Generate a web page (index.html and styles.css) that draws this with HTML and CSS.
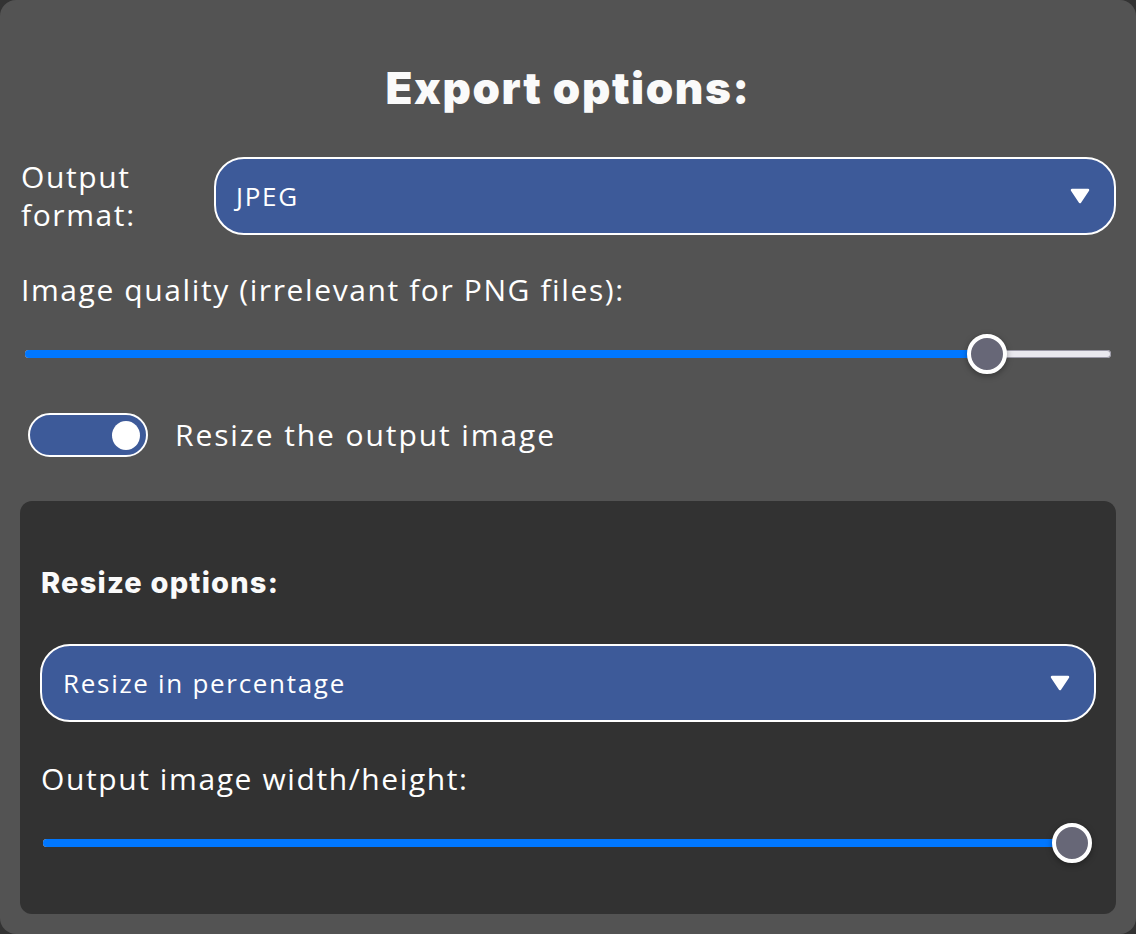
FILE: index.html
```html
<!DOCTYPE html>
<html>
<head>
<meta charset="utf-8">
<link rel="stylesheet" href="styles.css">
</head>
<body>
<div class="card">
  <h1 class="title">Export options:</h1>
  <div class="format-row">
    <label class="label format-label">Output<br>format:</label>
    <div class="select select-main">
      <span>JPEG</span>
      <svg class="arrow" width="20" height="16" viewBox="0 0 20 16"><path d="M2 2 L18 2 L10 14 Z" fill="#fff" stroke="#fff" stroke-width="2.5" stroke-linejoin="round"/></svg>
    </div>
  </div>
  <div class="label quality-label">Image quality (irrelevant for PNG files):</div>
  <div class="slider slider-quality">
    <div class="track"><div class="fill" style="width:88.6%"></div></div>
    <div class="thumb" style="left:88.6%"></div>
  </div>
  <div class="toggle-row">
    <div class="toggle"><div class="knob"></div></div>
    <span class="label toggle-label">Resize the output image</span>
  </div>
  <div class="inner">
    <h2 class="subtitle">Resize options:</h2>
    <div class="select select-resize">
      <span>Resize in percentage</span>
      <svg class="arrow" width="20" height="16" viewBox="0 0 20 16"><path d="M2 2 L18 2 L10 14 Z" fill="#fff" stroke="#fff" stroke-width="2.5" stroke-linejoin="round"/></svg>
    </div>
    <div class="label size-label">Output image width/height:</div>
    <div class="slider slider-size">
      <div class="track"><div class="fill" style="width:100%"></div></div>
      <div class="thumb" style="left:100%"></div>
    </div>
  </div>
</div>
</body>
</html>
```
FILE: styles.css
```css
html, body {
  margin: 0;
  padding: 0;
  background: #333333;
}
body {
  font-family: "Open Sans", "Liberation Sans", sans-serif;
  color: #ffffff;
}
.card {
  width: 1136px;
  height: 934px;
  box-sizing: border-box;
  background: #535353;
  border-radius: 16px;
  padding: 60px 20px 20px 20px;
  display: flex;
  flex-direction: column;
}
.title {
  margin: 0;
  text-align: center;
  font-family: Inter, "Open Sans", sans-serif;
  font-weight: 900;
  font-size: 44px;
  line-height: 56px;
  letter-spacing: 1.6px;
  color: #fafafa;
}
.label {
  font-size: 30px;
  line-height: 38px;
  color: #ffffff;
  letter-spacing: 1.6px;
}
.toggle-label {
  letter-spacing: 1.9px;
}
.format-row {
  display: flex;
  align-items: center;
  margin-top: 41px;
}
.format-label {
  width: 193px;
  flex: none;
  padding-left: 1px;
}
.select {
  flex: 1;
  height: 78px;
  box-sizing: border-box;
  border: 2px solid #ffffff;
  border-radius: 30px;
  background: #3d5a99;
  display: flex;
  align-items: center;
  justify-content: space-between;
  padding: 0 24px 0 20px;
  font-size: 26px;
  letter-spacing: 1.7px;
}
.arrow {
  display: block;
}
.quality-label {
  margin-top: 36px;
  padding-left: 1px;
}
.slider {
  position: relative;
  height: 40px;
  margin: 0 5px;
}
.slider-quality {
  margin-top: 25px;
}
.track {
  position: absolute;
  left: 0;
  right: 0;
  top: 16px;
  height: 8px;
  border-radius: 5px;
  background: #e9e8ee;
  box-shadow: inset 0 0 0 1px #9a98a6;
}
.fill {
  height: 100%;
  background: #0077ff;
  border-radius: 5px;
}
.thumb {
  position: absolute;
  top: 0;
  width: 40px;
  height: 40px;
  margin-left: -20px;
  box-sizing: border-box;
  border-radius: 50%;
  background: #676777;
  border: 4px solid #ffffff;
  box-shadow: 0 2px 6px rgba(0,0,0,0.35);
}
.toggle-row {
  display: flex;
  align-items: center;
  margin-top: 39px;
  padding-left: 8px;
  gap: 27px;
}
.toggle {
  width: 120px;
  height: 44px;
  flex: none;
  box-sizing: border-box;
  border: 2px solid #ffffff;
  border-radius: 22px;
  background: #3d5a99;
  display: flex;
  align-items: center;
  justify-content: flex-end;
  padding-right: 6px;
}
.knob {
  width: 28px;
  height: 29px;
  border-radius: 50%;
  background: #ffffff;
}
.inner {
  margin-top: 44px;
  flex: 1;
  background: #323232;
  border-radius: 12px;
  padding: 64px 20px 0 20px;
  display: flex;
  flex-direction: column;
}
.subtitle {
  margin: 0;
  font-family: Inter, "Open Sans", sans-serif;
  font-weight: 800;
  font-size: 29px;
  line-height: 36px;
  letter-spacing: 1.2px;
  padding-left: 1px;
  color: #fafafa;
}
.select-resize {
  flex: none;
  margin-top: 43px;
  padding-left: 21px;
}
.size-label {
  margin-top: 38px;
  padding-left: 1px;
}
.slider-size {
  margin: 25px 24px 0 3px;
}
```
